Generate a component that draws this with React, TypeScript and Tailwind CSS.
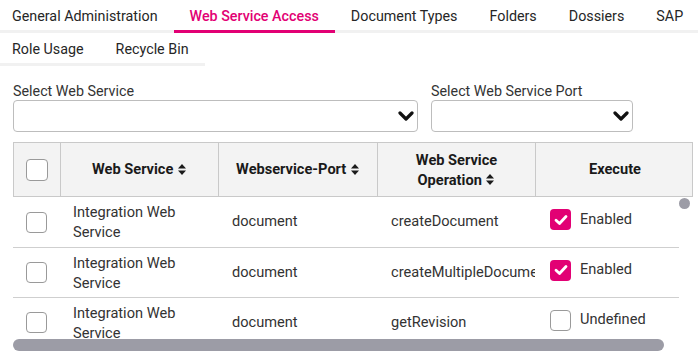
import { useState } from "react";

const tabs = [
  "General Administration",
  "Web Service Access",
  "Document Types",
  "Folders",
  "Dossiers",
  "SAP",
  "Role Usage",
  "Recycle Bin",
];

type Row = {
  service: string;
  port: string;
  operation: string;
  enabled: boolean;
};

const rows: Row[] = [
  { service: "Integration Web Service", port: "document", operation: "createDocument", enabled: true },
  { service: "Integration Web Service", port: "document", operation: "createMultipleDocuments", enabled: true },
  { service: "Integration Web Service", port: "document", operation: "getRevision", enabled: false },
];

export default function App() {
  const [active, setActive] = useState("Web Service Access");

  return (
    <div className="w-[698px] h-[360px] overflow-hidden bg-white text-[14.6px] text-[#262626] font-['Roboto','Liberation_Sans',sans-serif]">
      {/* Tabs */}
      <div className="flex flex-wrap ml-[-4px] w-[706px] text-[14.3px]">
        {tabs.map((t) => (
          <button
            key={t}
            onClick={() => setActive(t)}
            className={`px-4 pt-[6px] pb-[4px] leading-5 border-b-[3px] cursor-pointer ${
              t === active
                ? "border-[#e20074] text-[#e20074] font-medium"
                : "border-[#f1f1f1] text-[#262626]"
            }`}
          >
            {t}
          </button>
        ))}
      </div>

      {/* Selects */}
      <div className="flex gap-[13px] px-[13px] mt-[16px]">
        <SelectBox label="Select Web Service" width="w-[405px]" />
        <SelectBox label="Select Web Service Port" width="w-[202px]" />
      </div>

      {/* Table */}
      <div className="relative ml-[13px] mt-[10px] w-[680px]">
        <div className="h-[196px] overflow-hidden">
          <div className="grid grid-cols-[47px_158px_159px_158px_158px] h-[55px] bg-[#f3f3f3] border border-[#c9c9c9] font-bold text-[#1a1a1a]">
            <div className="flex items-center justify-center border-r border-[#c9c9c9]">
              <Box checked={false} size="w-[22px] h-[22px]" />
            </div>
            <HeadCell label="Web Service" />
            <HeadCell label="Webservice-Port" />
            <div className="flex items-center justify-center text-center border-r border-[#c9c9c9] leading-5">
              <span>
                Web Service
                <br />
                Operation <SortIcon />
              </span>
            </div>
            <div className="flex items-center justify-center">Execute</div>
          </div>

          <div className="w-[666px]">
            {rows.map((r, i) => (
              <div
                key={i}
                className={`grid grid-cols-[47px_158px_159px_158px_144px] border-b border-[#cfcfcf] text-[#333] ${
                  i === 0 ? "h-[51px]" : "h-[50px]"
                }`}
              >
                <div className="flex items-center justify-center">
                  <Box checked={false} size="w-[21px] h-[21px]" />
                </div>
                <div className="flex items-center px-[13px] leading-5">{r.service}</div>
                <div className="flex items-center px-[14px]">{r.port}</div>
                <div className="flex items-center px-[14px] overflow-hidden whitespace-nowrap">
                  {r.operation}
                </div>
                <div className="flex items-center gap-[9px] pl-[15px] pb-[5px]">
                  <Box checked={r.enabled} size="w-[21px] h-[21px]" />
                  <span>{r.enabled ? "Enabled" : "Undefined"}</span>
                </div>
              </div>
            ))}
          </div>
        </div>

        {/* horizontal scrollbar */}
        <div className="h-[14px] pt-[1px]">
          <div className="h-[12px] w-[651px] rounded-full bg-[#9c9ca6]" />
        </div>

        {/* vertical scrollbar thumb */}
        <div className="absolute left-[666px] top-[56px] w-[11px] h-[11px] rounded-full bg-[#9c9ca6]" />
      </div>
    </div>
  );
}

const SelectBox = ({ label, width }: { label: string; width: string }) => {
  return (
    <div className="flex flex-col">
      <span className="leading-[18px] text-[#333] text-[14.3px]">{label}</span>
      <div className={`${width} h-[32px] border border-[#bdbdbd] rounded-[4px] flex items-center justify-end pr-[3px]`}>
        <svg width="16" height="12" viewBox="0 0 16 12">
          <path d="M2 3 L8 9 L14 3" fill="none" stroke="#111" strokeWidth="3.2" strokeLinecap="round" strokeLinejoin="round" />
        </svg>
      </div>
    </div>
  );
};

const HeadCell = ({ label }: { label: string }) => {
  return (
    <div className="flex items-center justify-center border-r border-[#c9c9c9] whitespace-nowrap">
      {label}&nbsp;<SortIcon />
    </div>
  );
};

const SortIcon = () => {
  return (
    <svg width="10" height="13" viewBox="0 0 10 13" className="inline-block align-[-1px]">
      <path d="M1 5.5 L5 1 L9 5.5 Z" fill="#1a1a1a" />
      <path d="M1 7.5 L5 12 L9 7.5 Z" fill="#1a1a1a" />
    </svg>
  );
};

const Box = ({ checked, size }: { checked: boolean; size: string }) => {
  return (
    <div
      className={`${size} rounded-[4px] flex items-center justify-center ${
        checked ? "bg-[#e20074]" : "bg-white border border-[#9a9a9a]"
      }`}
    >
      {checked && (
        <svg width="14" height="12" viewBox="0 0 14 12">
          <path d="M2 6.2 L5.5 9.5 L12 2.5" fill="none" stroke="white" strokeWidth="2.8" strokeLinecap="round" strokeLinejoin="round" />
        </svg>
      )}
    </div>
  );
};
